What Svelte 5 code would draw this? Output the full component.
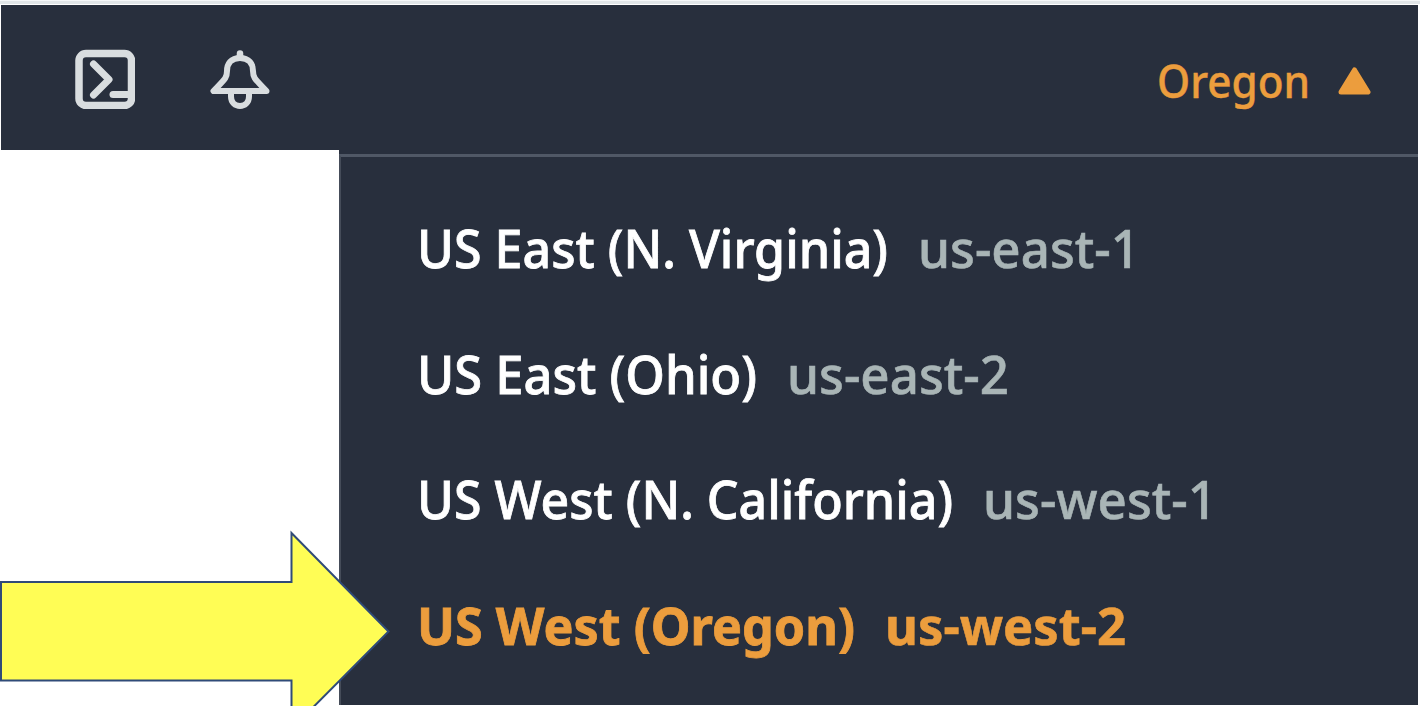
<script>
  const regions = [
    { name: 'US East (N. Virginia)', nameWidth: 471, code: 'us-east-1', codeWidth: 222 },
    { name: 'US East (Ohio)', nameWidth: 340, code: 'us-east-2', codeWidth: 222 },
    { name: 'US West (N. California)', nameWidth: 536, code: 'us-west-1', codeWidth: 234 },
    { name: 'US West (Oregon)', nameWidth: 438, code: 'us-west-2', codeWidth: 241, selected: true }
  ];
</script>

{#snippet label(text, width, kind)}
  <svg class="label {kind}" {width} height="74" viewBox="0 0 {width} 74">
    <text x="0" y="53" textLength={width} lengthAdjust="spacingAndGlyphs">{text}</text>
  </svg>
{/snippet}

<div class="page">
  <header class="topbar">
    <div class="tools">
      <svg class="icon" width="60" height="60" viewBox="0 0 60 60" fill="none" stroke="#d9dddf" stroke-width="7.500" stroke-linecap="round" stroke-linejoin="round">
        <rect x="4" y="4.500" width="52.500" height="52" rx="7" />
        <path d="M18.500 15 L34 30.500 L18.500 46" stroke-width="7" />
        <path d="M38 45.500 H55" stroke-width="7" />
      </svg>
      <svg class="icon" width="62" height="62" viewBox="0 0 62 62" fill="none" stroke="#d9dddf" stroke-width="6" stroke-linecap="round" stroke-linejoin="round">
        <path d="M31 4.500 V8" stroke-width="6.500" />
        <path d="M31 9 C22 9 18 15 18 22 C18 29 16 30 4.500 42 H57.500 C46 30 44 29 44 22 C44 15 40 9 31 9 Z" />
        <path d="M22 43 V47.500 C22 60 40 60 40 47.500 V43" />
      </svg>
    </div>
    <div class="current">
      <svg class="label picked" width="153" height="64" viewBox="0 0 153 64">
        <text x="0" y="50" textLength="153" lengthAdjust="spacingAndGlyphs">Oregon</text>
      </svg>
      <svg class="caret" width="33" height="28" viewBox="0 0 33 28">
        <path d="M16.500 3 L30 25 H3 Z" fill="#ec9d3d" stroke="#ec9d3d" stroke-width="5" stroke-linejoin="round" />
      </svg>
    </div>
  </header>
  <main class="content">
    <ul class="menu">
      {#each regions as region}
        <li class:selected={region.selected}>
          {@render label(region.name, region.nameWidth, 'name')}
          {@render label(region.code, region.codeWidth, 'code')}
        </li>
      {/each}
    </ul>
  </main>
  <svg class="arrow" width="392" height="180" viewBox="0 0 392 180">
    <path d="M1 56 H291.500 V7 L388.500 105.500 L291.500 203 V154.500 H1 Z" fill="#fffd55" stroke="#304b78" stroke-width="2" />
  </svg>
</div>

<style>
  :global(body) { margin: 0; overflow: hidden; }
  .page {
    position: relative;
    width: 1420px;
    height: 706px;
    box-sizing: border-box;
    padding: 4px 2px 0 1px;
    border-top: 1px solid #f6f8f9;
    background: linear-gradient(#e1e6e8 0 3px, #fff 3px);
    font-family: "Noto Sans", "Open Sans", sans-serif;
    overflow: hidden;
    display: flex;
    flex-direction: column;
  }
  .topbar {
    height: 145px;
    flex: none;
    background: #282f3d;
    display: flex;
    justify-content: space-between;
    align-items: flex-start;
  }
  .tools { display: flex; gap: 74px; padding: 44px 0 0 74px; }
  .icon { display: block; }
  .current { display: flex; gap: 28.5px; padding: 43px 47px 0 0; }
  .label { display: block; overflow: visible; }
  .picked { font-size: 45px; font-weight: 500; fill: #ec9d3d; stroke: #ec9d3d; stroke-width: 0.4px; }
  .caret { margin-top: 19px; }
  .content {
    flex: 1;
    min-height: 0;
    display: flex;
    justify-content: flex-end;
    background: linear-gradient(90deg, #fff 338px, #282f3d 338px);
    padding-top: 4px;
    margin-bottom: 1px;
  }
  .menu {
    width: 1079px;
    box-sizing: border-box;
    margin: 0;
    padding: 58px 0 0 76px;
    list-style: none;
    border-top: 3px solid #505866;
    border-left: 2px solid #454c59;
    background: #282f3d;
  }
  li { display: flex; gap: 30px; height: 125.5px; }
  .name { font-size: 52.5px; font-weight: 500; fill: #fff; stroke: #fff; stroke-width: 0.8px; }
  .code { font-size: 52.5px; font-weight: 500; fill: #a9b5b6; stroke: #a9b5b6; stroke-width: 0.6px; }
  .selected .label { fill: #ec9d3d; stroke: #ec9d3d; font-weight: 700; }
  .arrow { position: absolute; left: 0; top: 525px; }
</style>
